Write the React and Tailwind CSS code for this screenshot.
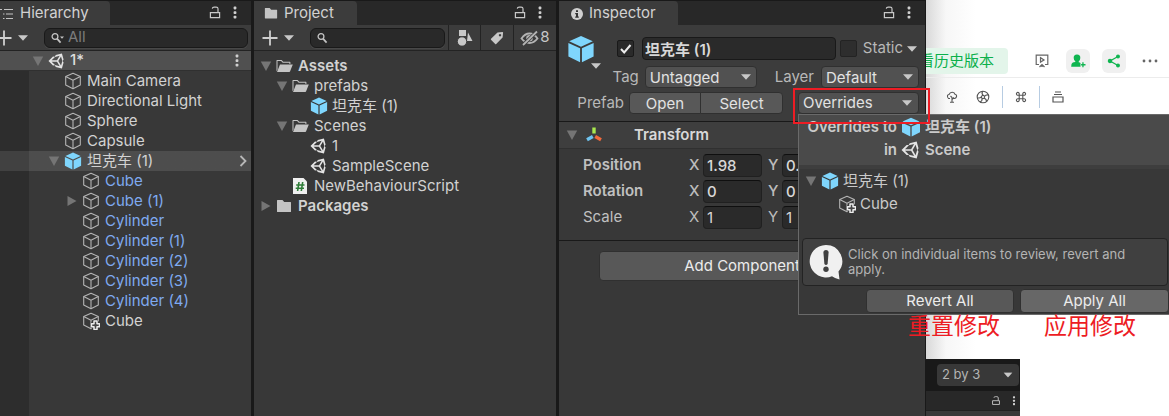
import React from "react";

const hierarchy = [
  { name: "Main Camera", depth: 1, icon: "cube" },
  { name: "Directional Light", depth: 1, icon: "cube" },
  { name: "Sphere", depth: 1, icon: "cube" },
  { name: "Capsule", depth: 1, icon: "cube" },
  { name: "坦克车 (1)", depth: 1, icon: "prefab", arrow: "down", selected: true },
  { name: "Cube", depth: 2, icon: "cube", linked: true },
  { name: "Cube (1)", depth: 2, icon: "cube", arrow: "right", linked: true },
  { name: "Cylinder", depth: 2, icon: "cube", linked: true },
  { name: "Cylinder (1)", depth: 2, icon: "cube", linked: true },
  { name: "Cylinder (2)", depth: 2, icon: "cube", linked: true },
  { name: "Cylinder (3)", depth: 2, icon: "cube", linked: true },
  { name: "Cylinder (4)", depth: 2, icon: "cube", linked: true },
  { name: "Cube", depth: 2, icon: "added" },
];

const assets = [
  { name: "Assets", depth: 0, icon: "open", arrow: "down", bold: true },
  { name: "prefabs", depth: 1, icon: "open", arrow: "down" },
  { name: "坦克车 (1)", depth: 2, icon: "prefab" },
  { name: "Scenes", depth: 1, icon: "open", arrow: "down" },
  { name: "1", depth: 2, icon: "unity" },
  { name: "SampleScene", depth: 2, icon: "unity" },
  { name: "NewBehaviourScript", depth: 1, icon: "script" },
  { name: "Packages", depth: 0, icon: "folder", arrow: "right", bold: true },
];

const treePad = ["pl-1.5", "pl-[22px]", "pl-10"];

function Cube({ added }) {
  return (
    <svg viewBox="0 0 18 18" className="size-[18px] shrink-0" fill="none" stroke="#b4b4b4" strokeWidth="1.1" strokeLinejoin="round">
      <path d="M9 1.2 16.3 4.6V13L9 16.8 1.7 13V4.6Z" />
      <path d="M1.7 4.6 9 8.2l7.3-3.6M9 8.2v8.6" />
      {added && (
        <>
          <circle cx="13.5" cy="13.3" r="5" fill="#383838" stroke="none" />
          <path d="M12 9h3v2.800h2.500v3H15v2.800h-3v-2.800H9.500v-3H12Z" fill="#444" stroke="#ececec" strokeWidth="1.500" />
        </>
      )}
    </svg>
  );
}

function Prefab({ className = "size-[18px]" }) {
  return (
    <svg viewBox="0 0 18 18" className={`${className} shrink-0`} fill="#7fd6fd">
      <path d="M9 .6 16.600 4 9 7.500 1.400 4Z" />
      <path d="M.9 5.100 8.400 8.500V17.500L.9 13.800Z" />
      <path d="M17.100 5.100 9.600 8.500V17.500l7.500-3.700Z" />
    </svg>
  );
}

function Unity({ className = "size-4" }) {
  return (
    <svg viewBox="0 0 512 512" className={`${className} shrink-0`} fill="#e4e4e4">
      <path d="M498.110 206.400 445.310 14.720 248.200 66.080 219 116.140l-59.200-.43L15.540 256l144.280 140.320 59.170-.43 29.240 50 197.080 51.360 52.800-191.620L468 256ZM223.770 124.200l150.780-37.690L288 232.330H114.870Zm0 263.630L114.870 279.710H288l86.550 145.810Zm193 14L330.170 256l86.580-145.840L458.560 256Z" />
    </svg>
  );
}

function Folder({ className = "w-4" }) {
  return (
    <svg viewBox="0 0 16 14" className={`${className} shrink-0`} fill="#c4c4c4">
      <path d="M1 1.500Q1 1 1.500 1h5l1.700 2h6.300q.5 0 .5.500V12.500q0 .5-.5.5h-13q-.5 0-.5-.5Z" />
    </svg>
  );
}

function OpenFolder() {
  return (
    <svg viewBox="0 0 17 14" className="w-[17px] shrink-0" fill="#c4c4c4">
      <path d="M.5 12.500V1.500Q.5 1 1 1h4.600l1.600 1.800h6.700q.5 0 .5.500V5h-1V3.800H6.700L5.100 2H1.500v8.600Z" />
      <path d="M4 5.500h12.800L14 12.600q-.2.400-.6.400H1Z" />
    </svg>
  );
}

function Script() {
  return (
    <svg viewBox="0 0 16 18" className="h-[18px] w-4 shrink-0">
      <path d="M1 1h10.500L15 4.500V17H1Z" fill="#f0f0f0" />
      <path d="M7 5 5.600 14M10.700 5 9.300 14M4.200 8h8.300M3.700 11.200H12" stroke="#2f7d38" strokeWidth="1.600" />
    </svg>
  );
}

function RowIcon({ kind }) {
  if (kind === "prefab") return <Prefab />;
  if (kind === "unity") return <Unity />;
  if (kind === "open") return <OpenFolder />;
  if (kind === "folder") return <Folder />;
  if (kind === "script") return <Script />;
  return <Cube added={kind === "added"} />;
}

function Fold({ dir }) {
  return (
    <span className="flex w-4 shrink-0 items-center">
      {dir && (
        <svg viewBox="0 0 12 12" className="size-3" fill="#757575">
          {dir === "down" ? <path d="M.8 1.500h10.400L6 11Z" /> : <path d="M1.500 1v10l9-5Z" />}
        </svg>
      )}
    </span>
  );
}

function Caret({ className = "" }) {
  return (
    <svg viewBox="0 0 10 6" className={`h-1.5 w-2.5 shrink-0 ${className}`} fill="#c8c8c8">
      <path d="M0 .3h10L5 5.800Z" />
    </svg>
  );
}

function Lock() {
  return (
    <svg viewBox="0 0 12 14" className="h-3.5 w-3" fill="none" stroke="#c8c8c8" strokeWidth="1.200">
      <path d="M1.400 6.600h9.200v5H1.400Z" />
      <path d="M9 6.400V2.800Q9 1.200 7.100 1.200H5.200Q3.400 1.200 3.300 2.600" />
    </svg>
  );
}

function Dots() {
  return (
    <svg viewBox="0 0 4 14" className="h-3.5 w-1" fill="#d0d0d0">
      <rect x=".6" y=".6" width="2.800" height="2.800" rx=".8" />
      <rect x=".6" y="5.200" width="2.800" height="2.800" rx=".8" />
      <rect x=".6" y="9.800" width="2.800" height="2.800" rx=".8" />
    </svg>
  );
}

function Plus() {
  return (
    <svg viewBox="0 0 16 16" className="size-4" stroke="#cfcfcf" strokeWidth="1.800">
      <path d="M8 .5v15M.5 8h15" />
    </svg>
  );
}

function TabBar({ icon, title, pad }) {
  return (
    <header className="flex h-6 items-stretch justify-between bg-[#282828]">
      <h2 className={`flex items-center gap-1.5 rounded-tr bg-[#3c3c3c] pt-px text-[15px] font-normal text-[#d2d2d2] ${pad}`}>
        {icon}
        {title}
      </h2>
      <div className="flex items-center gap-3 pr-3.5">
        <button aria-label={`Lock ${title}`}><Lock /></button>
        <button aria-label={`${title} menu`}><Dots /></button>
      </div>
    </header>
  );
}

function Search({ label, placeholder, caret }) {
  return (
    <label className="flex h-5 min-w-0 flex-1 items-center gap-1 rounded-md border border-[#191919] bg-[#292929] pl-1.5 shadow-[0_1px_0_#484848]">
      <svg viewBox="0 0 13 12" className="h-3 w-[13px] shrink-0" fill="none" stroke="#c4c4c4" strokeWidth="1.300">
        <circle cx="4" cy="4.500" r="2.900" />
        <path d="m6 6.600 3.600 4" strokeWidth="1.700" />
        {caret && <path d="M9 4.500h4L11 6.800Z" fill="#c4c4c4" stroke="none" />}
      </svg>
      <input aria-label={label} placeholder={placeholder} className="min-w-0 flex-1 bg-transparent text-[15px] outline-none placeholder:text-[#7c7c7c]" />
    </label>
  );
}

function Hierarchy() {
  return (
    <section className="flex min-w-0 flex-col bg-[#383838]">
      <TabBar
        title="Hierarchy"
        pad="w-[110px]"
        icon={
          <svg viewBox="0 0 14 12" className="h-3 w-3.5" stroke="#c4c4c4" strokeWidth="1.200">
            <path d="M0 1.500h2M4 1.500h9M3 6h1.500M6 6h7M3 10.500h1.500M6 10.500h7" />
          </svg>
        }
      />
      <div className="flex h-[26px] items-center border-b border-[#232323] bg-[#3c3c3c] pr-[3px]">
        <button aria-label="Create object" className="-ml-1 mr-4 flex items-center gap-1.5">
          <Plus />
          <Caret />
        </button>
        <Search label="Search hierarchy" placeholder="All" caret />
      </div>
      <div className="flex h-5 items-center border-b border-[#303030] bg-[#505050] pl-8 pr-3 text-[15px] font-medium text-[#dedede]">
        <Fold dir="down" />
        <Unity />
        <span className="ml-1.5 flex-1">1*</span>
        <button aria-label="Scene menu"><Dots /></button>
      </div>
      <ul className="flex-1 bg-linear-to-r from-[#2d2d2d] from-[29px] to-[#383838] to-[29px]">
        {hierarchy.map((row, i) => (
          <li
            key={i}
            className={`flex h-5 items-center text-[15px] whitespace-nowrap ${row.depth === 1 ? "pl-12" : "pl-[66px]"} ${row.selected ? "bg-linear-to-r from-[#414141] from-[29px] to-[#4d4d4d] to-[29px]" : ""} ${row.linked ? "text-[#7faaf0]" : "text-[#d2d2d2]"}`}
          >
            <Fold dir={row.arrow} />
            <RowIcon kind={row.icon} />
            <span className="ml-[5px] flex-1">{row.name}</span>
            {row.selected && (
              <svg viewBox="0 0 8 12" className="mr-1 h-3 w-2" fill="none" stroke="#b8b8b8" strokeWidth="1.800">
                <path d="m1.500 1 5 5-5 5" />
              </svg>
            )}
          </li>
        ))}
      </ul>
    </section>
  );
}

function Project() {
  const cell = "flex h-full items-center justify-center border-l border-[#232323]";
  return (
    <section className="flex min-w-0 flex-col bg-[#383838]">
      <TabBar title="Project" pad="w-[103px] pl-2.5" icon={<Folder className="w-3.5" />} />
      <div className="flex h-[26px] items-center border-b border-[#232323] bg-[#3c3c3c] pl-2">
        <button aria-label="Create asset" className="mr-4 flex items-center gap-1.5">
          <Plus />
          <Caret />
        </button>
        <Search label="Search project" />
        <button aria-label="Filter by type" className={`${cell} ml-[3px] w-8`}>
          <svg viewBox="0 0 16 16" className="size-4" fill="#c8c8c8">
            <path d="M2 0h7v6H2ZM11 2.500 15.500 11h-5.500Z" />
            <circle cx="5" cy="11.500" r="4.700" stroke="#3c3c3c" />
          </svg>
        </button>
        <button aria-label="Filter by label" className={`${cell} w-[33px]`}>
          <svg viewBox="0 0 14 14" className="size-3.5" fill="#c8c8c8">
            <path fillRule="evenodd" d="M7.500 1.500 12.500 1q.6 0 .6.600l-.5 5L6.200 13q-.5.400-1 0L1 8.800q-.4-.5 0-1ZM10 3a1.200 1.200 0 1 0 .01 0Z" />
          </svg>
        </button>
        <button aria-label="8 hidden packages" className={`${cell} w-[43px] text-[15px] text-[#c8c8c8]`}>
          <svg viewBox="0 0 20 16" className="h-4 w-5" fill="none" stroke="#b4b4b4" strokeWidth="1.800">
            <path d="M1.500 8.500Q5 3.500 9.500 3.500T17.500 8.500Q14 13 9.500 13T1.500 8.500Z" />
            <circle cx="9.500" cy="8.300" r="2.400" fill="#b4b4b4" />
            <path d="M3 15 17 1.500" stroke="#3c3c3c" strokeWidth="3.500" />
            <path d="M3 15 17 1.500" />
          </svg>
          8
        </button>
      </div>
      <ul className="pt-[5px]">
        {assets.map((row) => (
          <li
            key={row.name}
            className={`flex h-5 items-center text-[15px] whitespace-nowrap text-[#d2d2d2] ${treePad[row.depth]} ${row.bold ? "font-semibold" : ""}`}
          >
            <Fold dir={row.arrow} />
            <span className="mr-1 flex w-[18px]"><RowIcon kind={row.icon} /></span>
            {row.name}
          </li>
        ))}
      </ul>
    </section>
  );
}

function Dropdown({ label, value, className }) {
  return (
    <span className={`relative flex h-[22px] items-center ${className}`}>
      <select aria-label={label} className="h-full w-full appearance-none rounded border border-[#303030] bg-[#515151] pl-1 text-[15px] text-[#e2e2e2]">
        <option>{value}</option>
      </select>
      <Caret className="pointer-events-none absolute right-1.5" />
    </span>
  );
}

function Axis({ name, value, bold }) {
  return (
    <label className={`flex items-center ${bold ? "font-medium" : ""}`}>
      <span className="w-3.5 text-[#bcbcbc]">{name}</span>
      <input defaultValue={value} className="h-[23px] w-[59px] rounded border border-[#202020] border-t-[#0f0f0f] bg-[#2a2a2a] pl-[3px] text-[15px] text-[#d8d8d8]" />
    </label>
  );
}

function Vector({ name, values, bold }) {
  return (
    <div className="flex items-center gap-1.5">
      <span className={`w-[100px] text-[#c0c0c0] ${bold ? "font-semibold" : ""}`}>{name}</span>
      {["X", "Y"].map((axis, i) => (
        <Axis key={axis} name={axis} value={values[i]} bold={bold} />
      ))}
    </div>
  );
}

function OverridesPopup() {
  return (
    <div role="dialog" aria-label="Overrides" className="absolute top-[22px] left-0 z-10 w-[371px] border-t border-b border-l border-[#6a6a6a] bg-[#383838] text-[15px] text-[#cacaca]">
      <div className="flex flex-col border-b-4 border-[#3e3e3e] bg-[#4a4a4a] pb-1 font-semibold">
        <div className="flex h-6 items-center gap-1">
          <span className="w-[98px] text-right">Overrides to</span>
          <Prefab className="size-5" />
          坦克车 (1)
        </div>
        <div className="flex h-[22px] items-center gap-1">
          <span className="w-[98px] text-right">in</span>
          <Unity className="mr-0.5 size-[18px]" />
          Scene
        </div>
      </div>
      <ul className="h-[69px]">
        <li className="flex h-6 items-center gap-1 pl-1.5">
          <span className="-mr-1"><Fold dir="down" /></span>
          <Prefab />
          <span>坦克车 (1)</span>
        </li>
        <li className="flex h-[22px] items-center gap-1 pl-[39px]">
          <Cube added />
          <span>Cube</span>
        </li>
      </ul>
      <div className="mr-px ml-[3px] flex h-12 items-center gap-[5px] rounded border border-[#232323] bg-[#404040] pl-1.5">
        <svg viewBox="0 0 34 36" className="h-9 w-[34px] shrink-0" fill="#f0f0f0">
          <path d="M17 1a16.200 16.200 0 1 0 6 31.200Q27 35 30.500 35.500L29.500 27.500A16.200 16.200 0 0 0 17 1Z" />
          <path d="M14.400 8.500a2.600 2.600 0 0 1 5.200 0L18.600 20q-1.600 1.800-3.200 0Z" fill="#404040" />
          <circle cx="17" cy="25.200" r="2.700" fill="#404040" />
        </svg>
        <p className="w-[300px] text-[13px] leading-[15px] text-[#b4b4b4]">
          Click on individual items to review, revert and apply.
        </p>
      </div>
      <div className="flex justify-end gap-1.5 pt-[3px] pb-px text-[#ececec]">
        <button className="h-6 w-[148px] rounded border border-[#303030] bg-[#585858]">Revert All</button>
        <button className="h-6 w-[149px] rounded border border-[#303030] bg-[#676767]">Apply All</button>
      </div>
      <div className="absolute top-full right-0 flex gap-11 pr-[33px] text-[23px] leading-6 whitespace-nowrap text-[#ed1c24]">
        <span>重置修改</span>
        <span>应用修改</span>
      </div>
    </div>
  );
}

function Inspector() {
  return (
    <section className="relative z-10 flex min-w-0 flex-col border-r border-[#191919] bg-[#383838]">
      <TabBar
        title="Inspector"
        pad="w-[119px] pl-3"
        icon={
          <svg viewBox="0 0 12 12" className="size-3">
            <circle cx="6" cy="6" r="6" fill="#d0d0d0" />
            <path d="M5 2.200h2v1.800H5ZM4.200 5H7v3.600h.8v1.200H4.200V8.600H5V6.200h-.8Z" fill="#333" />
          </svg>
        }
      />
      <div className="flex h-[97px] flex-col gap-1 border-b border-[#191919] bg-[#3c3c3c] pt-3 pr-1.5 text-[15px] text-[#b8b8b8]">
        <div className="flex h-[23px] items-center pr-0.5">
          <span className="relative mr-[22px] ml-2 size-7 shrink-0">
            <Prefab className="size-7" />
            <Caret className="absolute top-7 left-6" />
          </span>
          <input type="checkbox" defaultChecked aria-label="Active" className="peer size-[17px] shrink-0 appearance-none rounded-xs border border-[#191919] bg-[#2a2a2a]" />
          <svg viewBox="0 0 12 12" className="pointer-events-none -ml-3.5 hidden size-3 shrink-0 peer-checked:block" fill="none" stroke="#ececec" strokeWidth="2">
            <path d="m1 6 3.200 3.500L10.500 2" />
          </svg>
          <input aria-label="Object name" defaultValue="坦克车 (1)" className="ml-2.5 h-[23px] min-w-0 flex-1 rounded border border-[#191919] bg-[#2a2a2a] pl-0.5 text-[15px] font-semibold text-[#d8d8d8]" />
          <label className="ml-1 flex items-center gap-1.5">
            <input type="checkbox" className="size-[17px] appearance-none rounded-xs border border-[#232323] bg-[#2e2e2e]" />
            Static
          </label>
          <Caret className="ml-1" />
        </div>
        <div className="mt-0.5 flex h-[22px] items-center justify-end">
          Tag
          <Dropdown label="Tag" value="Untagged" className="mr-[18px] ml-1.5 w-28" />
          Layer
          <Dropdown label="Layer" value="Default" className="ml-[7px] w-[98px]" />
        </div>
        <div className="flex h-[22px] items-center justify-end">
          Prefab
          <button className="ml-[5px] h-[22px] w-[72px] rounded-l border border-[#303030] bg-[#585858] text-[#e2e2e2]">Open</button>
          <button className="-ml-px mr-[15px] h-[22px] w-[83px] rounded-r border border-[#303030] bg-[#585858] text-[#e2e2e2]">Select</button>
          <div className="relative">
            <button aria-expanded="true" className="flex h-[22px] w-[121px] items-center justify-between rounded border border-[#303030] bg-[#515151] pr-1.5 pl-1 text-[#e2e2e2]">
              Overrides
              <Caret />
            </button>
            <OverridesPopup />
            <div className="pointer-events-none absolute -top-1 -left-[5px] z-20 h-9 w-[137px] border-2 border-[#ed1c24]" />
          </div>
        </div>
      </div>
      <div className="flex h-[27px] items-center border-b border-[#303030] bg-[#3e3e3e] pl-[7px] text-[15px] font-semibold text-[#d8d8d8]">
        <Fold dir="down" />
        <svg viewBox="0 0 16 16" className="ml-1 mr-8 size-4" strokeWidth="3.400">
          <path d="M8 .5v6" stroke="#a9e84f" />
          <path d="M6.800 9.500 1 12.700" stroke="#6fc4f0" />
          <path d="M9.200 9.500l5.800 3.200" stroke="#f26a3d" />
        </svg>
        Transform
      </div>
      <div className="flex h-[92px] flex-col gap-[3px] overflow-hidden border-b border-[#191919] pt-[5px] pl-6 text-[15px]">
        <Vector name="Position" values={["1.98", "0."]} bold />
        <Vector name="Rotation" values={["0", "0"]} bold />
        <Vector name="Scale" values={["1", "1"]} />
      </div>
      <button className="mx-10 mt-2.5 h-[30px] rounded border border-[#303030] bg-[#585858] text-[15px] text-[#ececec]">Add Component</button>
    </section>
  );
}

function Browser() {
  const tile = "flex size-6 items-center justify-center rounded-md";
  const rule = "h-[22px] w-px bg-[#b7cce2]";
  return (
    <section className="flex min-w-0 flex-col overflow-hidden bg-linear-to-r from-[#d9d9d9] via-[#f7f7f7] via-[20px] to-white to-[50px]">
      <div className="flex h-[78px] items-end justify-end border-b border-[#ececec] pr-[7px] pb-[3px]">
        <button className="mr-[22px] h-[26px] shrink-0 rounded bg-[#e3f5ea] px-3.5 text-[15px] whitespace-nowrap text-[#0bb04b]">查看历史版本</button>
        <div className="flex shrink-0 gap-3 pb-px">
          <button aria-label="Present" className={tile}>
            <svg viewBox="0 0 14 14" className="size-3.5" fill="none" stroke="#666" strokeWidth="1.200">
              <path d="M4 10.500H1.200V1.200h11.600v9.300H10M5.500 3.700v4.400L9 5.900ZM4.500 13 7 10.500 9.500 13M7 10.500V13" />
            </svg>
          </button>
          <button aria-label="Invite" className={`${tile} bg-[#f0f0f0]`}>
            <svg viewBox="0 0 16 16" className="size-4" fill="#0fb550">
              <path d="M7 1.500a3.300 3.300 0 0 1 3.300 3.500Q10.200 7.500 8.700 8.500v.8q1.300.2 1.800.6v3.900H1.200q0-3.500 1.300-4 .8-.4 2.800-.7v-.8Q3.800 7.500 3.700 5A3.300 3.300 0 0 1 7 1.500ZM12.300 9.200h1.300v1.900H15.500v1.300h-1.900v1.900h-1.300v-1.900h-1.200V11.100h1.200Z" />
            </svg>
          </button>
          <button aria-label="Share" className={`${tile} bg-[#f0f0f0]`}>
            <svg viewBox="0 0 14 14" className="size-3.5" fill="#0fb550" stroke="#0fb550" strokeWidth="1.300">
              <path d="M11 2.500 3 7l8 4.500" fill="none" />
              <circle cx="3" cy="7" r="1.600" />
              <circle cx="11" cy="2.500" r="1.300" />
              <circle cx="11" cy="11.500" r="1.300" />
            </svg>
          </button>
          <button aria-label="More" className={tile}>
            <svg viewBox="0 0 16 4" className="w-4" fill="#666">
              <circle cx="2" cy="2" r="1.400" />
              <circle cx="8" cy="2" r="1.400" />
              <circle cx="14" cy="2" r="1.400" />
            </svg>
          </button>
        </div>
      </div>
      <div className="flex h-[38px] items-center gap-3 pl-5">
        <button aria-label="Mind map">
          <svg viewBox="0 0 12 12" className="size-3" fill="none" stroke="#555" strokeWidth="1.100">
            <path d="M4 7.500H2.600Q1 6.500 1.500 4.500q.6-1 1.500-1Q4 1.200 6.300 1.300T9 3.300q2 .4 1.500 2.500-.6 1.500-2 1.700H6.500M6 11.200V6.500L4.500 5M6 8.500l2-2M4 11.300h4" />
          </svg>
        </button>
        <button aria-label="Aperture" className="ml-1.5">
          <svg viewBox="0 0 14 14" className="size-3.5" fill="none" stroke="#555" strokeWidth="1.100">
            <circle cx="7" cy="7" r="5.800" />
            <circle cx="7" cy="7" r="1.600" />
            <path d="M7 1.200Q5 3 7 5.400M12.500 5Q9.800 4.500 8.500 6.500M10.500 11.500Q10.600 8.900 8 8.200M4 12Q6.500 11 6 8.300M1.200 7.800Q3.800 8.600 5.400 6.800" />
          </svg>
        </button>
        <span className={rule} />
        <button aria-label="Shortcuts">
          <svg viewBox="0 0 12 12" className="size-3" fill="none" stroke="#555" strokeWidth="1.100">
            <path d="M4.200 4.200h3.600v3.600H4.200ZM4.200 4.200H2.900A1.400 1.400 0 1 1 4.200 2.900ZM7.800 4.200V2.900A1.400 1.400 0 1 1 9.100 4.200ZM7.800 7.800h1.300A1.400 1.400 0 1 1 7.800 9.100ZM4.200 7.800v1.300A1.400 1.400 0 1 1 2.900 7.800Z" />
          </svg>
        </button>
        <span className={rule} />
        <button aria-label="Stack">
          <svg viewBox="0 0 12 12" className="size-3" fill="none" stroke="#555" strokeWidth="1.200">
            <path d="M3 1h6M2 3.500h8M1 6h10v5H1Z" />
          </svg>
        </button>
      </div>
      <div className="mt-auto w-[94px] bg-[#383838]">
        <div className="flex h-8 items-center bg-[#191919] pl-[11px]">
          <span className="relative flex items-center">
            <select aria-label="Layout" defaultValue="2 by 3" className="h-[22px] w-[82px] appearance-none rounded bg-[#383838] pl-[5px] text-[13px] text-[#b4b4b4]">
              <option>2 by 3</option>
            </select>
            <Caret className="pointer-events-none absolute right-1.5 scale-90" />
          </span>
        </div>
        <div className="flex h-5 items-center justify-end gap-2.5 border-b border-[#202020] bg-[#282828] pr-1">
          <button aria-label="Lock panel" className="scale-75"><Lock /></button>
          <button aria-label="Panel menu" className="scale-75"><Dots /></button>
        </div>
        <div className="h-[5px]" />
      </div>
    </section>
  );
}

export default function App() {
  return (
    <main className="min-h-screen overflow-hidden bg-white font-['Inter','Noto_Sans_CJK_SC',sans-serif]">
      <div className="grid min-h-screen grid-cols-[254fr_305fr_367fr_243fr]">
        <div className="grid border-t border-r-3 border-[#191919]"><Hierarchy /></div>
        <div className="grid border-t border-r-3 border-[#191919]"><Project /></div>
        <div className="grid border-t border-[#191919]"><Inspector /></div>
        <Browser />
      </div>
    </main>
  );
}
